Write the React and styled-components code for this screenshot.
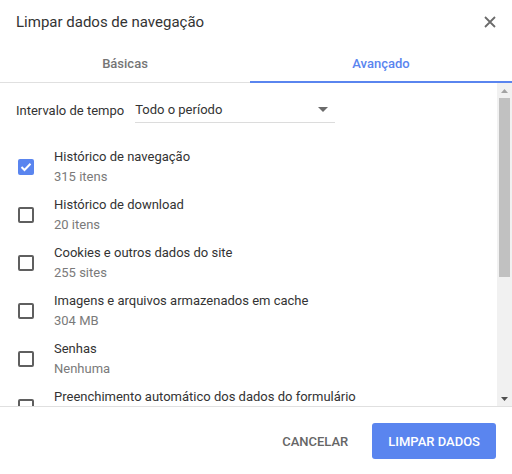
import styled, { createGlobalStyle } from "styled-components";

const Global = createGlobalStyle`
  html, body {
    margin: 0;
    padding: 0;
    background: #fff;
  }
  body {
    font-family: Roboto, "Liberation Sans", sans-serif;
    color: #333;
  }
`;

const BLUE = "#5a85ef";

const Dialog = styled.div`
  width: 512px;
  height: 474px;
  display: flex;
  flex-direction: column;
  background: #fff;
  overflow: hidden;
`;

const Header = styled.div`
  height: 44px;
  flex: none;
  display: flex;
  align-items: center;
  justify-content: space-between;
  padding: 0 16px;
`;

const Title = styled.h1`
  margin: 0;
  font-size: 15px;
  font-weight: 400;
  color: #333;
`;

const Close = styled.button`
  border: 0;
  background: none;
  padding: 0;
  width: 12px;
  height: 12px;
  display: flex;
  cursor: pointer;
`;

const Tabs = styled.div`
  display: flex;
  flex: none;
  height: 38px;
  border-bottom: 1px solid #e0e0e0;
`;

const Tab = styled.div`
  width: ${(p) => (p.$wide ? "auto" : "250px")};
  flex: ${(p) => (p.$wide ? 1 : "none")};
  display: flex;
  align-items: center;
  justify-content: center;
  font-size: 13px;
  font-weight: 500;
  color: ${(p) => (p.$active ? BLUE : "#757575")};
  border-bottom: 2px solid ${(p) => (p.$active ? BLUE : "transparent")};
  margin-bottom: -1px;
  padding-top: 1px;
`;

const Body = styled.div`
  flex: 1;
  min-height: 0;
  display: flex;
`;

const Content = styled.div`
  flex: 1;
  overflow: hidden;
  padding-top: 11px;
`;

const ScrollBar = styled.div`
  width: 15px;
  flex: none;
  background: #f1f1f1;
  display: flex;
  flex-direction: column;
`;

const ScrollArrow = styled.div`
  height: 15px;
  flex: none;
  display: flex;
  align-items: center;
  justify-content: center;
`;

const Track = styled.div`
  flex: 1;
  padding: 0 2px;
`;

const Thumb = styled.div`
  height: 179px;
  background: #c1c1c1;
`;

const Range = styled.div`
  height: 32px;
  display: flex;
  align-items: center;
  padding-left: 16px;
  margin-bottom: 17px;
  font-size: 13px;
`;

const Label = styled.span`
  margin-right: 11px;
  color: #333;
`;

const Select = styled.div`
  width: 200px;
  height: 25px;
  border-bottom: 1px solid #dcdcdc;
  display: flex;
  align-items: center;
  justify-content: space-between;
  padding-right: 7px;
  box-sizing: border-box;
  color: #333;
`;

const Row = styled.label`
  height: 48px;
  box-sizing: border-box;
  padding-top: 4px;
  display: flex;
  align-items: flex-start;
`;

const Box = styled.span`
  flex: none;
  width: 16px;
  height: 16px;
  margin: 12px 20px 0 18px;
  box-sizing: border-box;
  border-radius: 2px;
  border: ${(p) => (p.$checked ? "none" : "2px solid #5f5f5f")};
  background: ${(p) => (p.$checked ? BLUE : "transparent")};
  display: flex;
  align-items: center;
  justify-content: center;
`;

const Texts = styled.div`
  display: flex;
  flex-direction: column;
  font-size: 13px;
  line-height: 20px;
  white-space: nowrap;
`;

const Name = styled.span`
  color: #333;
`;

const Detail = styled.span`
  color: #7a7a7a;
`;

const Footer = styled.div`
  height: 68px;
  flex: none;
  border-top: 1px solid #e0e0e0;
  box-sizing: border-box;
  display: flex;
  justify-content: flex-end;
  align-items: flex-start;
  gap: 8px;
  padding: 16px 16px 0 0;
`;

const Button = styled.button`
  height: 36px;
  padding: 0 16px;
  border: 0;
  border-radius: 3px;
  font-family: Roboto, "Liberation Sans", sans-serif;
  font-size: 13px;
  font-weight: 500;
  text-transform: uppercase;
  color: ${(p) => (p.$primary ? "#fff" : "#666")};
  background: ${(p) => (p.$primary ? BLUE : "transparent")};
  cursor: pointer;
`;

const items = [
  { name: "Histórico de navegação", detail: "315 itens", checked: true },
  { name: "Histórico de download", detail: "20 itens" },
  { name: "Cookies e outros dados do site", detail: "255 sites" },
  { name: "Imagens e arquivos armazenados em cache", detail: "304 MB" },
  { name: "Senhas", detail: "Nenhuma" },
  { name: "Preenchimento automático dos dados do formulário", detail: "Nenhum" },
];

const Check = () => (
  <svg width="12" height="10" viewBox="0 0 12 10">
    <path d="M1.5 5 L4.5 8 L10.5 1.8" fill="none" stroke="#fff" strokeWidth="2" />
  </svg>
);

export default function App() {
  return (
    <>
      <Global />
      <Dialog>
        <Header>
          <Title>Limpar dados de navegação</Title>
          <Close aria-label="Fechar">
            <svg width="12" height="12" viewBox="0 0 12 12">
              <path d="M1 1 L11 11 M11 1 L1 11" stroke="#6b6b6b" strokeWidth="1.8" />
            </svg>
          </Close>
        </Header>
        <Tabs>
          <Tab>Básicas</Tab>
          <Tab $wide $active>Avançado</Tab>
        </Tabs>
        <Body>
          <Content>
            <Range>
              <Label>Intervalo de tempo</Label>
              <Select>
                <span>Todo o período</span>
                <svg width="10" height="5" viewBox="0 0 10 5">
                  <path d="M0 0 H10 L5 5 Z" fill="#6b6b6b" />
                </svg>
              </Select>
            </Range>
            {items.map((it) => (
              <Row key={it.name}>
                <Box $checked={it.checked}>{it.checked && <Check />}</Box>
                <Texts>
                  <Name>{it.name}</Name>
                  <Detail>{it.detail}</Detail>
                </Texts>
              </Row>
            ))}
          </Content>
          <ScrollBar>
            <ScrollArrow>
              <svg width="7" height="4" viewBox="0 0 7 4">
                <path d="M0 4 L3.5 0 L7 4 Z" fill="#a3a3a3" />
              </svg>
            </ScrollArrow>
            <Track>
              <Thumb />
            </Track>
            <ScrollArrow>
              <svg width="7" height="4" viewBox="0 0 7 4">
                <path d="M0 0 H7 L3.5 4 Z" fill="#505050" />
              </svg>
            </ScrollArrow>
          </ScrollBar>
        </Body>
        <Footer>
          <Button>Cancelar</Button>
          <Button $primary>Limpar dados</Button>
        </Footer>
      </Dialog>
    </>
  );
}
